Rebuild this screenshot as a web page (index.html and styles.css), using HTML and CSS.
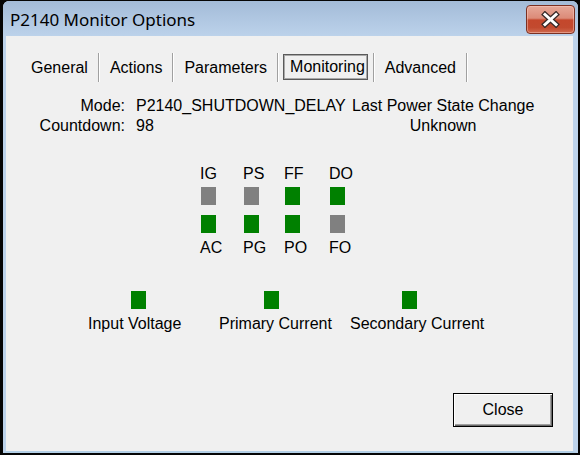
FILE: index.html
```html
<!DOCTYPE html>
<html lang="en">
<head>
  <meta charset="UTF-8" />
  <title>P2140 Monitor Options</title>
  <link rel="stylesheet" href="styles.css">
</head>
<body>
  <div class="window">
    <div class="titlebar">
      <span class="title">P2140 Monitor Options</span>
      <button class="close-x" title="Close">
        <svg width="19" height="17" viewBox="0 0 19 17">
          <path d="M4 3.5 L15 13.5 M15 3.5 L4 13.5" stroke="#3a2a28" stroke-width="5.5" stroke-linecap="square" />
          <path d="M4 3.5 L15 13.5 M15 3.5 L4 13.5" stroke="#ffffff" stroke-width="3" stroke-linecap="square" />
        </svg>
      </button>
    </div>

    <div class="client">
      <!-- Tabs -->
      <div class="tabs">
        <div class="tab">General</div>
        <div class="tab">Actions</div>
        <div class="tab">Parameters</div>
        <div class="tab tab-active"><span class="focus">Monitoring</span></div>
        <div class="tab">Advanced</div>
      </div>

      <!-- Status info -->
      <div class="info">
        <span class="lbl">Mode:</span>
        <span class="val">P2140_SHUTDOWN_DELAY</span>
        <span class="extra">Last Power State Change</span>
        <span class="lbl">Countdown:</span>
        <span class="val">98</span>
        <span class="extra center">Unknown</span>
      </div>

      <!-- Signal indicators -->
      <div class="signals">
        <div class="sig-col">
          <span>IG</span>
          <div class="led off"></div>
          <div class="led on second"></div>
          <span class="bottom">AC</span>
        </div>
        <div class="sig-col">
          <span>PS</span>
          <div class="led off"></div>
          <div class="led on second"></div>
          <span class="bottom">PG</span>
        </div>
        <div class="sig-col">
          <span>FF</span>
          <div class="led on"></div>
          <div class="led on second"></div>
          <span class="bottom">PO</span>
        </div>
        <div class="sig-col">
          <span>DO</span>
          <div class="led on"></div>
          <div class="led off second"></div>
          <span class="bottom">FO</span>
        </div>
      </div>

      <!-- Power indicators -->
      <div class="power">
        <div class="pw-item">
          <div class="led on pw-iv"></div>
          <span>Input Voltage</span>
        </div>
        <div class="pw-item">
          <div class="led on pw-pc"></div>
          <span>Primary Current</span>
        </div>
        <div class="pw-item">
          <div class="led on pw-sc"></div>
          <span>Secondary Current</span>
        </div>
      </div>

      <button class="btn-close">Close</button>
    </div>
  </div>
</body>
</html>
```

FILE: styles.css
```css
html, body {
  margin: 0;
  padding: 0;
}
body {
  background: #050505;
  width: 580px;
  height: 455px;
  overflow: hidden;
  font-family: "Liberation Sans", Arial, sans-serif;
  font-size: 16px;
  color: #000;
}
.window {
  margin: 1px 0 0 3px;
  width: 575px;
  height: 452px;
  box-sizing: border-box;
  border-left: 3px solid #bdd3eb;
  border-right: 5px solid #bdd3eb;
  border-bottom: 2px solid #b3cfe6;
  border-radius: 6px 6px 0 0;
  display: flex;
  flex-direction: column;
  background: #bdd3eb;
}
.titlebar {
  height: 35px;
  display: flex;
  align-items: flex-start;
  background: linear-gradient(#a3bbd8, #b2c9e3 60%, #bcd2ea);
  border-radius: 6px 6px 0 0;
  margin-left: -3px;
  margin-right: -5px;
  padding-left: 7px;
}
.title {
  font-family: "Noto Sans", sans-serif;
  font-size: 17px;
  line-height: 20px;
  margin-top: 9px;
  color: #000;
}
.close-x {
  margin-left: auto;
  margin-top: 4px;
  margin-right: 3px;
  width: 49px;
  height: 29px;
  padding: 0;
  border: 1px solid #7b3022;
  border-radius: 4px;
  background: linear-gradient(#e6a899, #dc8b78 45%, #c4472c 52%, #c24a2f 80%, #d06a4f);
  box-shadow: inset 0 0 0 1px rgba(255, 210, 200, 0.45);
  display: flex;
  align-items: center;
  justify-content: center;
}
.close-x svg {
  display: block;
}
.client {
  flex: 1;
  background: #f0f0f0;
  display: flex;
  flex-direction: column;
  align-items: flex-start;
}
.tabs {
  display: flex;
  margin: 17px 0 0 25px;
  height: 29px;
}
.tab {
  display: flex;
  align-items: center;
  line-height: 18px;
  padding: 0 10px 0 11px;
  border-right: 1px solid #a0a0a0;
  box-shadow: 1px 0 0 #ffffff;
}
.tab:first-child {
  padding-left: 0;
}
.tab-active {
  padding: 0 5px 0 5px;
  align-items: flex-start;
}
.focus {
  margin-top: 1px;
  padding: 3px 2px 3px 6px;
  border: 1px solid #5a5a5a;
  box-shadow: inset 0 0 0 1px #a9a9a9;
}
.info {
  display: grid;
  grid-template-columns: 119px 227px auto;
  margin-top: 14px;
  line-height: 20px;
}
.lbl {
  text-align: right;
}
.val {
  padding-left: 11px;
  white-space: nowrap;
}
.center {
  text-align: center;
}
.signals {
  display: grid;
  grid-template-columns: 43px 41px 45px auto;
  margin: 29px 0 0 194px;
  line-height: 18px;
}
.sig-col {
  display: flex;
  flex-direction: column;
  align-items: flex-start;
}
.led {
  width: 15px;
  height: 18px;
}
.sig-col .led {
  margin: 4px 0 0 1px;
}
.sig-col .second {
  margin-top: 10px;
}
.sig-col .bottom {
  margin-top: 6px;
}
.on {
  background: #008000;
}
.off {
  background: #808080;
}
.power {
  display: grid;
  grid-template-columns: 131px 131px auto;
  margin: 34px 0 0 82px;
  line-height: 18px;
}
.pw-item {
  display: flex;
  flex-direction: column;
  align-items: flex-start;
}
.pw-item span {
  margin-top: 6px;
}
.pw-iv { margin-left: 43px; }
.pw-pc { margin-left: 45px; }
.pw-sc { margin-left: 52px; }
.btn-close {
  margin: auto 20px 24px 0;
  align-self: flex-end;
  width: 100px;
  height: 34px;
  font-family: "Liberation Sans", Arial, sans-serif;
  font-size: 16px;
  color: #000;
  background: #f0f0f0;
  border: 1px solid #000;
  box-shadow: inset 1px 1px 0 #ffffff, inset -1px -1px 0 #696969, inset -2px -2px 0 #a0a0a0;
  padding: 0;
}
```
